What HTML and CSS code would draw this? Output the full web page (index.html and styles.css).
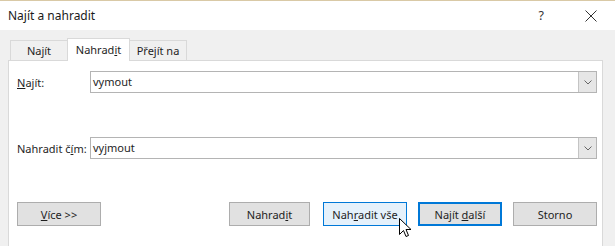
FILE: index.html
```html
<!DOCTYPE html>
<html lang="cs">
<head>
    <meta charset="UTF-8">
    <title>Najít a nahradit</title>
    <link rel="stylesheet" href="styles.css">
</head>
<body>

<div class="dialog">
    <div class="titlebar">
        <span class="title">Najít a nahradit</span>
        <span class="help">?</span>
        <svg class="close" width="12" height="12" viewBox="0 0 12 12">
            <path d="M0.5 0.5 L11.5 11.5 M11.5 0.5 L0.5 11.5" stroke="#333" stroke-width="1" fill="none"/>
        </svg>
    </div>

    <div class="body">
        <ul class="tabs">
            <li class="tab">Najít</li>
            <li class="tab active">Nahrad<u>i</u>t</li>
            <li class="tab">Přejít na</li>
        </ul>

        <div class="panel">
            <div class="field">
                <label class="label"><u>N</u>ajít:</label>
                <div class="combo">
                    <span class="combo-text">vymout</span>
                    <span class="combo-btn">
                        <svg width="8" height="5" viewBox="0 0 8 5"><path d="M0.5 0.5 L4 4 L7.5 0.5" stroke="#666" fill="none"/></svg>
                    </span>
                </div>
            </div>

            <div class="field">
                <label class="label">Nahradit č<u>í</u>m:</label>
                <div class="combo">
                    <span class="combo-text">vyjmout</span>
                    <span class="combo-btn">
                        <svg width="8" height="5" viewBox="0 0 8 5"><path d="M0.5 0.5 L4 4 L7.5 0.5" stroke="#666" fill="none"/></svg>
                    </span>
                </div>
            </div>

            <div class="buttons">
                <button class="btn more"><u>V</u>íce &gt;&gt;</button>
                <button class="btn narrow">Nahrad<u>i</u>t</button>
                <button class="btn hover">Nah<u>r</u>adit vše</button>
                <button class="btn default">Najít <u>d</u>alší</button>
                <button class="btn">Storno</button>
                <!-- mouse pointer over "Nahradit vše" -->
                <svg class="cursor" width="13" height="21" viewBox="0 0 13 21">
                    <path d="M0.5 0.5 L0.5 16.5 L4.5 12.5 L7 18.5 L9.5 17.5 L7 11.5 L12 11.5 Z" fill="#fff" stroke="#000" stroke-width="1" stroke-linejoin="miter"/>
                </svg>
            </div>
        </div>
    </div>
</div>

</body>
</html>
```

FILE: styles.css
```css
body {
    margin: 0;
    padding: 0;
    font-family: "Noto Sans", "Open Sans", Arial, sans-serif;
    font-size: 11px;
    color: #1e1e1e;
    background-color: #f0f0f0;
}
.dialog {
    width: 615px;
    height: 246px;
    overflow: hidden;
}
.titlebar {
    display: flex;
    align-items: center;
    height: 29px;
    background-color: #fff;
    border-top: 1px solid #d9c9a6;
    padding-left: 8px;
}
.title {
    font-size: 12px;
    color: #1a1a1a;
    flex: 1;
}
.help {
    font-size: 12.5px;
    color: #333;
    margin-right: 41px;
}
.close {
    margin-right: 18px;
}
.body {
    padding: 8px 12px 0 8px;
}
.tabs {
    list-style: none;
    margin: 0 0 0 2px;
    padding: 0;
    display: flex;
    align-items: flex-end;
    height: 22px;
}
.tab {
    width: 56px;
    height: 19px;
    line-height: 19px;
    text-align: center;
    border: 1px solid #d9d9d9;
    border-bottom: none;
    background-color: #f0f0f0;
    color: #1e1e1e;
}
.tab.active {
    width: 61px;
    height: 22px;
    line-height: 22px;
    background-color: #fff;
    border-color: #d9d9d9;
    position: relative;
    top: 1px;
}
.tab + .tab {
    margin-left: -1px;
}
.panel {
    height: 176px;
    background-color: #fff;
    border: 1px solid #d9d9d9;
    padding: 10px 5px 0 8px;
}
.field {
    display: flex;
    align-items: center;
    height: 22px;
    margin-bottom: 44px;
}
.label {
    width: 73px;
    flex: none;
    white-space: nowrap;
}
.combo {
    flex: 1;
    height: 20px;
    display: flex;
    border: 1px solid #b4b4b4;
    background-color: #fff;
}
.combo-text {
    flex: 1;
    padding-left: 2px;
    line-height: 20px;
}
.combo-btn {
    width: 17px;
    display: flex;
    align-items: center;
    justify-content: center;
    background-color: #e6e6e6;
    border-left: 1px solid #c4c4c4;
}
.buttons {
    position: relative;
    display: flex;
    align-items: center;
    margin-top: -1px;
}
.btn {
    width: 84px;
    height: 24px;
    padding: 0;
    margin-left: 11px;
    font-family: inherit;
    font-size: 11px;
    color: #1e1e1e;
    background-color: #e1e1e1;
    border: 1px solid #adadad;
}
.btn.more {
    margin-left: 0;
    margin-right: auto;
}
.btn.narrow {
    width: 81px;
    margin-right: 2px;
}
.btn.hover {
    background-color: #e5f1fb;
    border-color: #0078d7;
}
.btn.default {
    border: 2px solid #0078d7;
}
.cursor {
    position: absolute;
    left: 382px;
    top: 16px;
}
```
